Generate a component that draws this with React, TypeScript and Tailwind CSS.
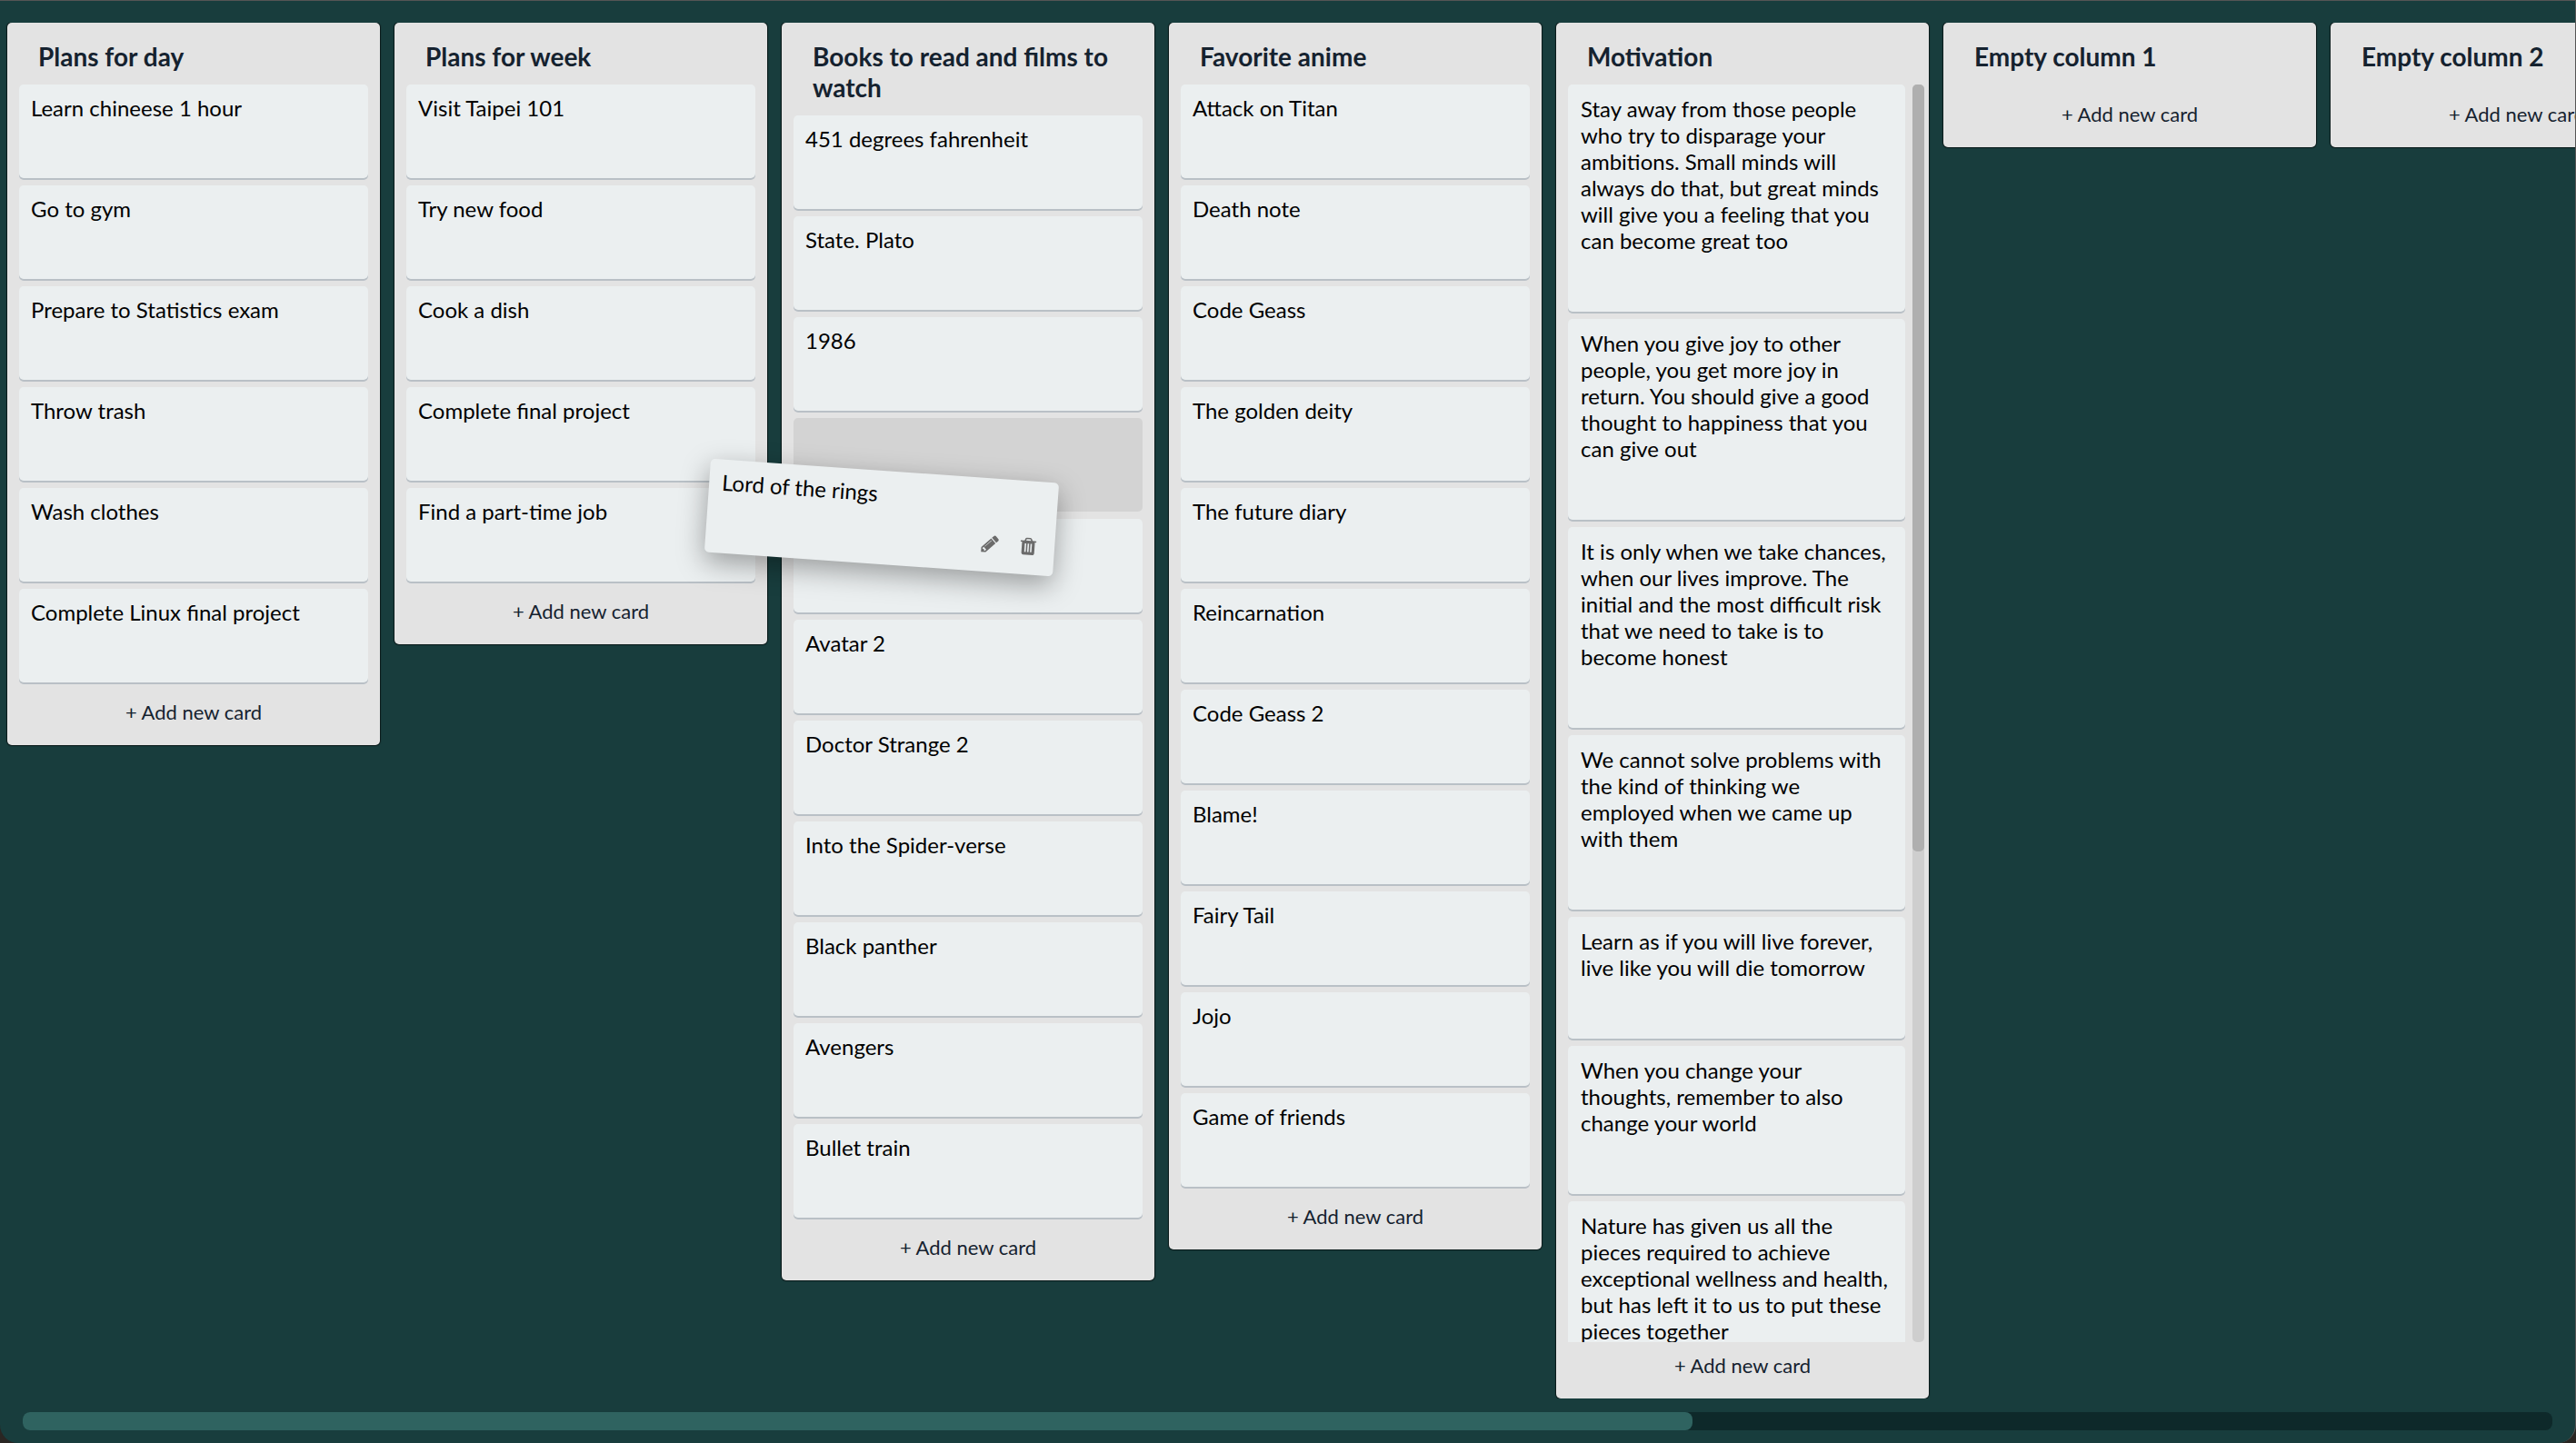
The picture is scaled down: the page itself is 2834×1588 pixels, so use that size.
type Card = { text?: string; slot?: boolean };
type Column = { title: string; cards: Card[]; long?: boolean };

const plain = (...texts: string[]): Card[] => texts.map((text) => ({ text }));

const columns: Column[] = [
  {
    title: "Plans for day",
    cards: plain(
      "Learn chineese 1 hour",
      "Go to gym",
      "Prepare to Statistics exam",
      "Throw trash",
      "Wash clothes",
      "Complete Linux final project",
    ),
  },
  {
    title: "Plans for week",
    cards: plain(
      "Visit Taipei 101",
      "Try new food",
      "Cook a dish",
      "Complete final project",
      "Find a part-time job",
    ),
  },
  {
    title: "Books to read and films to watch",
    cards: [
      ...plain("451 degrees fahrenheit", "State. Plato", "1986"),
      { text: "Lord of the rings", slot: true },
      {},
      ...plain(
        "Avatar 2",
        "Doctor Strange 2",
        "Into the Spider-verse",
        "Black panther",
        "Avengers",
        "Bullet train",
      ),
    ],
  },
  {
    title: "Favorite anime",
    cards: plain(
      "Attack on Titan",
      "Death note",
      "Code Geass",
      "The golden deity",
      "The future diary",
      "Reincarnation",
      "Code Geass 2",
      "Blame!",
      "Fairy Tail",
      "Jojo",
      "Game of friends",
    ),
  },
  {
    title: "Motivation",
    long: true,
    cards: plain(
      "Stay away from those people\nwho try to disparage your\nambitions. Small minds will\nalways do that, but great minds\nwill give you a feeling that you\ncan become great too",
      "When you give joy to other\npeople, you get more joy in\nreturn. You should give a good\nthought to happiness that you\ncan give out",
      "It is only when we take chances,\nwhen our lives improve. The\ninitial and the most difficult risk\nthat we need to take is to\nbecome honest",
      "We cannot solve problems with\nthe kind of thinking we\nemployed when we came up\nwith them",
      "Learn as if you will live forever,\nlive like you will die tomorrow",
      "When you change your\nthoughts, remember to also\nchange your world",
      "Nature has given us all the\npieces required to achieve\nexceptional wellness and health,\nbut has left it to us to put these\npieces together",
    ),
  },
  { title: "Empty column 1", cards: [] },
  { title: "Empty column 2", cards: [] },
];

function PencilIcon() {
  return (
    <svg viewBox="-128 0 1792 1792" className="size-[22px]" fill="currentColor" aria-hidden="true">
      <path d="M363 1536l91-91-235-235-91 91v107h128v128h107zm523-928q0-22-22-22-10 0-17 7l-542 542q-7 7-7 17 0 22 22 22 10 0 17-7l542-542q7-7 7-17zm-54-192l416 416-832 832h-416v-416zm683 96q0 53-37 90l-166 166-416-416 166-165q36-38 90-38 53 0 91 38l235 234q37 39 37 91z" />
    </svg>
  );
}

function TrashIcon() {
  return (
    <svg viewBox="0 0 1792 1792" className="size-[22px]" fill="currentColor" aria-hidden="true">
      <path d="M704 1376v-704q0-14-9-23t-23-9h-64q-14 0-23 9t-9 23v704q0 14 9 23t23 9h64q14 0 23-9t9-23zm256 0v-704q0-14-9-23t-23-9h-64q-14 0-23 9t-9 23v704q0 14 9 23t23 9h64q14 0 23-9t9-23zm256 0v-704q0-14-9-23t-23-9h-64q-14 0-23 9t-9 23v704q0 14 9 23t23 9h64q14 0 23-9t9-23zm-544-992h448l-48-117q-7-9-17-11h-317q-10 2-17 11zm928 32v64q0 14-9 23t-23 9h-96v948q0 83-47 143.5t-113 60.5h-832q-66 0-113-58.5t-47-141.5v-952h-96q-14 0-23-9t-9-23v-64q0-14 9-23t23-9h309l70-167q15-37 54-63t79-26h320q40 0 79 26t54 63l70 167h309q14 0 23 9t9 23z" />
    </svg>
  );
}

function DraggedCard({ text }: { text?: string }) {
  return (
    <div className="absolute top-[58px] -left-[95px] z-10 flex h-full w-full rotate-4 flex-col justify-between rounded-[5px] bg-[#ebeff0] px-3.5 pt-2.5 pb-5 shadow-[0_10px_30px_rgba(0,0,0,0.35)]">
      <p className="text-[24px] leading-[29px]">{text}</p>
      <div className="flex justify-end gap-5 pr-1 text-[#6b6b6b]">
        <button type="button" aria-label="Edit card">
          <PencilIcon />
        </button>
        <button type="button" aria-label="Delete card">
          <TrashIcon />
        </button>
      </div>
    </div>
  );
}

function CardItem({ card, long }: { card: Card; long?: boolean }) {
  if (card.slot) {
    return (
      <li className="relative h-[103px] shrink-0 rounded-[5px] bg-[#d3d3d3]">
        <DraggedCard text={card.text} />
      </li>
    );
  }
  return (
    <li
      className={
        "min-h-[103px] shrink-0 rounded-[5px] bg-[#ebeff0] text-[24px] leading-[29px] whitespace-pre shadow-[0_2px_0_#b9c0c6] " +
        (long ? "px-3.5 pt-3 pb-16" : "px-[13px] pt-[11px]")
      }
    >
      {card.text}
    </li>
  );
}

function BoardColumn({ column }: { column: Column }) {
  return (
    <section className="flex max-h-full w-[410px] shrink-0 flex-col rounded-[5px] bg-[#e3e3e3] text-[#15222f] shadow-[0_0_1px_1px_rgba(0,0,0,0.6)]">
      <h2 className="px-[34px] pt-5 pb-3.5 text-[28px] leading-[34px] font-bold">{column.title}</h2>
      {column.long ? (
        <div className="flex min-h-0 pr-[5px] pl-[13px] text-black">
          <ul className="flex min-w-0 grow flex-col gap-2 overflow-hidden">
            {column.cards.map((card, i) => (
              <CardItem key={i} card={card} long />
            ))}
          </ul>
          <div className="ml-2 w-[13px] shrink-0 rounded-[5px] bg-[#cecece]">
            <div className="h-[61%] rounded-[5px] bg-[#afafaf]" />
          </div>
        </div>
      ) : (
        <ul className="flex flex-col gap-2 px-[13px] pb-[7px] text-black">
          {column.cards.map((card, i) => (
            <CardItem key={i} card={card} />
          ))}
        </ul>
      )}
      <button type="button" className="shrink-0 pt-3 pb-[22px] text-center text-[22px] leading-7">
        + Add new card
      </button>
    </section>
  );
}

export default function App() {
  return (
    <div className="bg-[#2a2623]">
      <main className="flex h-screen flex-col overflow-hidden rounded-b-[20px] border-t border-r border-[#555] bg-[#183d3d] pt-6 font-['Lato',sans-serif]">
        <div className="flex min-h-0 flex-1 items-start gap-4 overflow-hidden pl-2">
          {columns.map((column) => (
            <BoardColumn key={column.title} column={column} />
          ))}
        </div>
        <div className="mx-[25px] mt-[15px] mb-3.5 h-5 shrink-0 rounded-lg bg-[#0e292a]">
          <div className="h-full w-[66%] rounded-lg bg-[#2f6360]" />
        </div>
      </main>
    </div>
  );
}
